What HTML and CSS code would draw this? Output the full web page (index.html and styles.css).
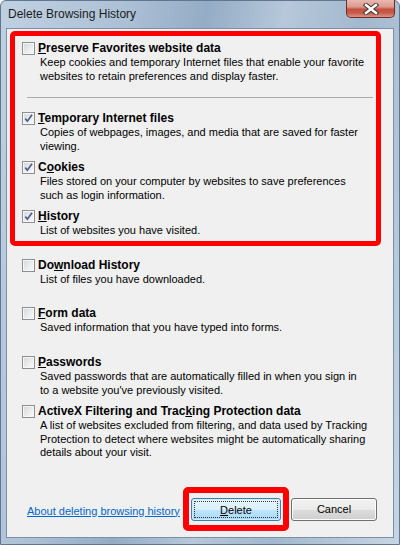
FILE: index.html
```html
<!DOCTYPE html>
<html lang="en">
<head>
    <meta charset="UTF-8">
    <title>Delete Browsing History</title>
    <link rel="stylesheet" href="styles.css">
</head>
<body>
    <div class="window">
        <div class="titlebar">
            <span class="title">Delete Browsing History</span>
            <div class="close-btn">
                <svg width="16" height="12" viewBox="0 0 16 12">
                    <path d="M3 2 L13 10 M13 2 L3 10" stroke="#3b3b3b" stroke-width="4.4" stroke-linecap="square"/>
                    <path d="M3 2 L13 10 M13 2 L3 10" stroke="#ffffff" stroke-width="2.4" stroke-linecap="square"/>
                </svg>
            </div>
        </div>

        <div class="client">
            <div class="highlight">
                <div class="item">
                    <div class="head"><span class="box"></span><span class="label"><u>P</u>reserve Favorites website data</span></div>
                    <div class="desc">Keep cookies and temporary Internet files that enable your favorite websites to retain preferences and display faster.</div>
                </div>
                <div class="separator"></div>
                <div class="item">
                    <div class="head"><span class="box checked"><svg width="9" height="9" viewBox="0 0 9 9"><path d="M1.3 4.6 L3.4 7.2 L8 0.8" fill="none" stroke="#4a5f8f" stroke-width="1.7"/></svg></span><span class="label"><u>T</u>emporary Internet files</span></div>
                    <div class="desc">Copies of webpages, images, and media that are saved for faster viewing.</div>
                </div>
                <div class="item">
                    <div class="head"><span class="box checked"><svg width="9" height="9" viewBox="0 0 9 9"><path d="M1.3 4.6 L3.4 7.2 L8 0.8" fill="none" stroke="#4a5f8f" stroke-width="1.7"/></svg></span><span class="label">C<u>o</u>okies</span></div>
                    <div class="desc">Files stored on your computer by websites to save preferences such as login information.</div>
                </div>
                <div class="item last">
                    <div class="head"><span class="box checked"><svg width="9" height="9" viewBox="0 0 9 9"><path d="M1.3 4.6 L3.4 7.2 L8 0.8" fill="none" stroke="#4a5f8f" stroke-width="1.7"/></svg></span><span class="label"><u>H</u>istory</span></div>
                    <div class="desc">List of websites you have visited.</div>
                </div>
            </div>

            <div class="plain-list">
                <div class="item short">
                    <div class="head"><span class="box"></span><span class="label">Do<u>w</u>nload History</span></div>
                    <div class="desc">List of files you have downloaded.</div>
                </div>
                <div class="item">
                    <div class="head"><span class="box"></span><span class="label"><u>F</u>orm data</span></div>
                    <div class="desc">Saved information that you have typed into forms.</div>
                </div>
                <div class="item">
                    <div class="head"><span class="box"></span><span class="label"><u>P</u>asswords</span></div>
                    <div class="desc">Saved passwords that are automatically filled in when you sign in to a website you've previously visited.</div>
                </div>
                <div class="item">
                    <div class="head"><span class="box"></span><span class="label">ActiveX Filtering and Trac<u>k</u>ing Protection data</span></div>
                    <div class="desc">A list of websites excluded from filtering, and data used by Tracking Protection to detect where websites might be automatically sharing details about your visit.</div>
                </div>
            </div>

            <div class="footer">
                <a class="help-link" href="#">About deleting browsing history</a>
                <div class="btn-highlight">
                    <button class="btn default"><span class="focus"><u>D</u>elete</span></button>
                </div>
                <button class="btn cancel">Cancel</button>
            </div>
        </div>
    </div>
</body>
</html>
```

FILE: styles.css
```css
body {
    margin: 0;
    padding: 0;
    background: #ffffff;
    font-family: "Liberation Sans", Arial, sans-serif;
}

.window {
    width: 400px;
    height: 545px;
    box-sizing: border-box;
    border: 1px solid #61768f;
    border-radius: 6px 6px 0 0;
    padding: 0 5px 6px 5px;
    display: flex;
    flex-direction: column;
    background: linear-gradient(100deg, #bfd0e1 0%, #adc1d6 25%, #94acc5 42%, #b6c8da 58%, #a2b8ce 74%, #c6d5e4 100%);
}

.titlebar {
    height: 27px;
    display: flex;
    justify-content: space-between;
    align-items: flex-start;
}

.title {
    font-size: 12px;
    line-height: 16px;
    color: #1b1b1b;
    padding: 5px 0 0 2px;
}

.close-btn {
    width: 49px;
    height: 18px;
    margin-top: -1px;
    margin-right: -1px;
    box-sizing: border-box;
    border: 1px solid #6f2d26;
    border-top: none;
    border-radius: 0 0 5px 5px;
    background: linear-gradient(#e9b9b0 0%, #dc9a8d 40%, #c4513f 55%, #c65a48 75%, #dc9484 100%);
    display: flex;
    align-items: center;
    justify-content: center;
}

.close-btn svg {
    display: block;
}

.client {
    flex: 1;
    background: #f0f0f0;
    border: 1px solid #7d8fa5;
    display: flex;
    flex-direction: column;
    padding-bottom: 6px;
}

.highlight {
    width: 371px;
    box-sizing: border-box;
    margin: 2px 0 0 3px;
    border: 5px solid #ff0000;
    border-radius: 5px;
    padding: 6px 0 0 7px;
}

.plain-list {
    margin-top: 13px;
    padding-left: 15px;
}

.item {
    height: 49px;
}

.item.short {
    height: 48px;
}

.item.last {
    height: 31px;
}

.head {
    display: flex;
    align-items: center;
    height: 13px;
}

.box {
    width: 11px;
    height: 11px;
    border: 1px solid #8e8f8f;
    background: linear-gradient(135deg, #d4d6d9 0%, #eceef0 60%, #fbfbfb 100%);
    box-shadow: inset 0 0 0 1px #f6f6f6;
    display: flex;
    align-items: center;
    justify-content: center;
}

.box svg {
    display: block;
}

.label {
    margin-left: 3px;
    font-size: 12px;
    font-weight: bold;
    line-height: 13px;
    color: #000;
}

.desc {
    margin: 1px 0 0 18px;
    font-size: 11px;
    line-height: 13.5px;
    color: #000;
    width: 328px;
}

.separator {
    height: 1px;
    background: #acacac;
    margin: 6px 3px 14px 5px;
}

.footer {
    margin-top: auto;
    display: flex;
    align-items: center;
    padding-left: 20px;
}

.help-link {
    font-size: 11px;
    color: #0066cc;
    text-decoration: underline;
    margin-top: 3px;
}

.btn-highlight {
    margin-left: auto;
    border: 6px solid #ff0000;
    border-radius: 5px;
    padding: 5px 2px 4px 2px;
}

.btn {
    font-family: "Liberation Sans", Arial, sans-serif;
    font-size: 11px;
    color: #000;
    height: 23px;
    box-sizing: border-box;
    border-radius: 3px;
    padding: 0;
    display: flex;
    align-items: center;
    justify-content: center;
}

.btn.default {
    width: 90px;
    border: 1px solid #3c7fb1;
    background: linear-gradient(#eaf6fd 0%, #d9f0fc 50%, #bee6fd 51%, #a7d9f5 100%);
    box-shadow: inset 0 0 0 1px #cdeafb;
    padding: 2px;
}

.focus {
    flex: 1;
    align-self: stretch;
    display: flex;
    align-items: center;
    justify-content: center;
    border: 1px dotted #333;
}

.btn.cancel {
    width: 86px;
    margin: 0 16px 0 2px;
    border: 1px solid #707070;
    background: linear-gradient(#f2f2f2 0%, #ebebeb 50%, #dddddd 51%, #cfcfcf 100%);
    box-shadow: inset 0 0 0 1px #fcfcfc;
}
```
